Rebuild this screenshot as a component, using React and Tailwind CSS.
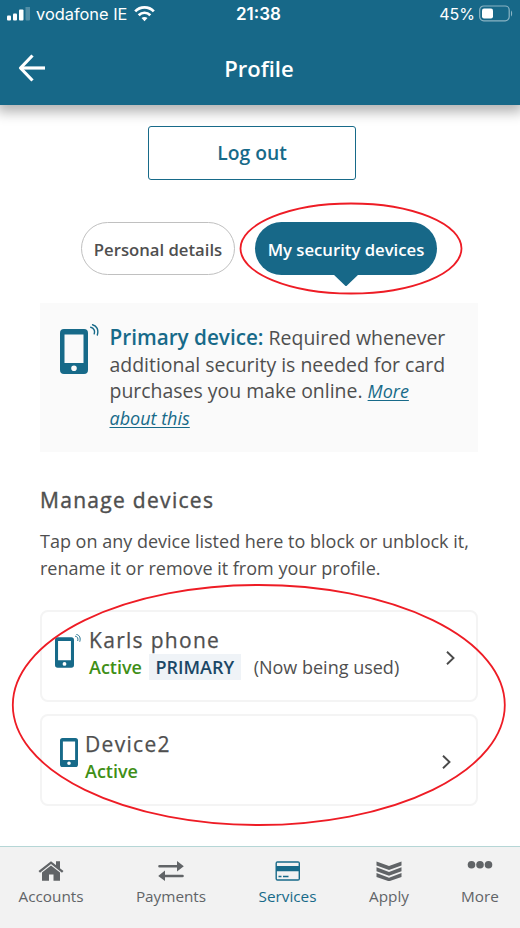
import React from "react";

function PhoneIcon({ className }) {
  return (
    <svg viewBox="0 0 28 45" className={className}>
      <path
        fillRule="evenodd"
        fill="#176a89"
        d="M4 0h20a4 4 0 0 1 4 4v37a4 4 0 0 1-4 4H4a4 4 0 0 1-4-4V4a4 4 0 0 1 4-4ZM4.500 5.500v28.500h19V5.500ZM14 36.500a2.800 2.800 0 1 0 0 5.600a2.800 2.800 0 0 0 0-5.600Z"
      />
    </svg>
  );
}

function WavesIcon({ className }) {
  return (
    <svg
      viewBox="0 0 9 12"
      fill="none"
      stroke="#176a89"
      strokeWidth="1.400"
      strokeLinecap="round"
      className={className}
    >
      <path d="M2.600 .7C7 1.700 8.800 6 7.300 11" />
      <path d="M.7 3.300C3.800 3.900 5.200 6.500 4.200 9.900" />
    </svg>
  );
}

function Chevron({ className }) {
  return (
    <svg
      viewBox="0 0 9 14"
      fill="none"
      stroke="#4a4a4a"
      strokeWidth="1.900"
      className={className}
    >
      <path d="M1 .8L7.500 7L1 13.200" />
    </svg>
  );
}

function StatusBar() {
  return (
    <div className="relative flex h-7 items-center text-[17px] leading-7 text-white">
      <svg viewBox="0 0 24 15" className="ml-[7px] h-[15px] w-6 shrink-0" fill="#fff">
        <rect x="0" y="8.500" width="4" height="5" rx="1" />
        <rect x="6" y="6.500" width="4" height="7" rx="1" />
        <rect x="12" y="2.500" width="4.500" height="11" rx="1" />
        <rect x="18.500" y="-.5" width="4.500" height="14" rx="1" opacity=".25" />
      </svg>
      <span className="ml-[5px] w-[91px] whitespace-nowrap font-[Inter,sans-serif] text-[16.400px]">
        vodafone IE
      </span>
      <svg viewBox="0 0 21 16" className="ml-[7px] h-4 w-[21px] shrink-0" fill="none" stroke="#fff" strokeWidth="2.700">
        <path d="M1.200 5.400C6.200 .1 14.800 .1 19.800 5.400" />
        <path d="M4.700 9.200C8 5.900 13 5.900 16.300 9.200" />
        <path d="M7.500 12.100C9.200 10.500 11.800 10.500 13.500 12.100L10.500 15.200Z" fill="#fff" stroke="none" />
      </svg>
      <span className="ml-[81px] w-[46px] whitespace-nowrap font-[Inter,sans-serif] text-[17px] font-semibold">
        21:38
      </span>
      <span className="ml-auto mr-1 font-[Inter,sans-serif] text-[16px]">45%</span>
      <svg viewBox="0 0 34 17" className="-mt-[2px] mr-[7px] h-[17px] w-[34px] shrink-0">
        <rect x=".7" y="1" width="29.500" height="14.800" rx="4" fill="none" stroke="#8bb4c4" strokeWidth="1.200" />
        <rect x="3" y="3.500" width="11" height="10" rx="2" fill="#fff" />
        <path d="M32 5.500v6C33.500 10.500 33.500 6.500 32 5.500Z" fill="#8bb4c4" />
      </svg>
    </div>
  );
}

function Header() {
  return (
    <header className="h-[105px] bg-[#176888] shadow-[0_4px_12px_3px_rgba(0,0,0,0.3)]">
      <StatusBar />
      <div className="grid h-20 grid-cols-[60px_1fr_62px] items-center">
        <svg viewBox="0 0 28 28" className="ml-[18px] h-7 w-7" fill="none" stroke="#fff" strokeWidth="3.200">
          <path d="M27 14H3" />
          <path d="M14.500 1.500L2.500 14L14.500 26.500" strokeLinejoin="round" />
        </svg>
        <h1 className="text-center text-[22px] font-semibold text-white">Profile</h1>
      </div>
    </header>
  );
}

function Tabs() {
  return (
    <div className="ml-[81px] mt-[42px] flex gap-5">
      <button className="h-[53px] w-[154px] whitespace-nowrap rounded-full border border-[#c0c0c0] pt-[2px] text-[16.700px] font-semibold text-[#4f4f4f]">
        Personal details
      </button>
      <button className="relative h-[53px] w-[182px] whitespace-nowrap rounded-full bg-[#176888] pt-[2px] text-[16.700px] font-semibold text-white">
        My security devices
        <svg viewBox="0 0 26 13" className="absolute left-[78px] top-[52px] h-[13px] w-[26px]" fill="#176888">
          <path d="M0 0H26L14 11.500Q13 12.500 12 11.500Z" />
        </svg>
      </button>
    </div>
  );
}

function PrimaryNotice() {
  return (
    <section className="ml-10 mt-7 flex h-[149px] w-[438px] bg-[#fafafa]">
      <div className="flex w-[69.500px] shrink-0 pl-5">
        <PhoneIcon className="mt-[26px] h-[45px] w-7" />
        <WavesIcon className="ml-[2px] mt-[21px] h-3 w-[9px]" />
      </div>
      <p className="mt-[21px] whitespace-nowrap text-[19.450px] leading-[26.500px] text-[#4f4f4f]">
        <span className="text-[20.700px] font-semibold text-[#176a89]">Primary device:</span>{" "}
        Required whenever
        <br />
        additional security is needed for card
        <br />
        purchases you make online.{" "}
        <a className="text-[18px] italic text-[#176a89] underline underline-offset-2">More</a>
        <br />
        <a className="text-[18px] italic text-[#176a89] underline underline-offset-2">about this</a>
      </p>
    </section>
  );
}

function DeviceCards() {
  return (
    <div className="ml-10 mt-7 flex w-[438px] flex-col gap-3">
      <div className="flex h-[92px] rounded-lg border-2 border-[#f4f4f4] pl-[13px]">
        <PhoneIcon className="mt-[25px] h-[31px] w-[19px]" />
        <WavesIcon className="ml-[1px] mt-[22px] h-2 w-[6px]" />
        <div className="ml-2 mt-[14px] whitespace-nowrap">
          <h3 className="text-[21px] leading-7 tracking-[1.300px] text-[#4f4f4f] [-webkit-text-stroke:0.25px_#4f4f4f]">
            Karls phone
          </h3>
          <div className="flex items-center text-[18px] leading-[26px]">
            <span className="font-semibold text-[#3f8f17]">Active</span>
            <span className="ml-[7px] bg-[#eff3f7] px-[6.500px] font-semibold text-[#1b4766]">PRIMARY</span>
            <span className="ml-[13px] text-[#4f4f4f]">(Now being used)</span>
          </div>
        </div>
        <Chevron className="ml-auto mr-[21px] mt-[39px] h-[14px] w-[9px]" />
      </div>
      <div className="flex h-[92px] rounded-lg border-2 border-[#f4f4f4] pl-[18px]">
        <PhoneIcon className="mt-[22px] h-[29px] w-[18px]" />
        <div className="ml-[7px] mt-[14px] whitespace-nowrap">
          <h3 className="text-[21px] leading-7 tracking-[1.300px] text-[#4f4f4f] [-webkit-text-stroke:0.25px_#4f4f4f]">
            Device2
          </h3>
          <div className="text-[18px] font-semibold leading-[26px] text-[#3f8f17]">Active</div>
        </div>
        <Chevron className="ml-auto mr-[25px] mt-[39px] h-[14px] w-[9px]" />
      </div>
    </div>
  );
}

function NavItem({ label, children, className }) {
  return (
    <div className={`flex flex-col items-center pt-[14px] ${className}`}>
      <svg viewBox="0 0 26 20" className="h-5 w-[26px]" fill="currentColor">
        {children}
      </svg>
      <span className="mt-[3px] text-[15.300px] leading-6">{label}</span>
    </div>
  );
}

function BottomNav() {
  return (
    <nav className="mt-10 flex h-[82px] border-t border-[#b5d6d6] bg-[#f2f2f2] text-[#616467]">
      <NavItem label="Accounts" className="w-[102px]">
        <path d="M13 .2L25.500 10L24 11.800L13 3.100L2 11.800L.5 10Z M18 .2h4v7.800l-4-3.300Z" />
        <path d="M13 4.500L22 11.500V19.800H15.500V13.500H11V19.800H4V11.500Z" />
      </NavItem>
      <NavItem label="Payments" className="w-[138px]">
        <path d="M1.500 4H19V0L25.800 5.200L19 10.400V6.600H1.500A1.300 1.300 0 0 1 1.500 4Z" />
        <path d="M24.500 13.700H7V9.600L.2 14.900L7 20V16.300H24.500A1.300 1.300 0 0 0 24.500 13.700Z" />
      </NavItem>
      <NavItem label="Services" className="w-[95px] text-[#176a89]">
        <path
          fillRule="evenodd"
          d="M2.500 .2h20.500a2 2 0 0 1 2 2v15.500a2 2 0 0 1-2 2H2.500a2 2 0 0 1-2-2V2.200a2 2 0 0 1 2-2ZM1.900 1.800v3.200h21.700V1.800ZM1.900 10.200v8h21.700v-8Z"
        />
        <path d="M3.500 14.700h3v1.600h-3zM8 14.700h5.500v1.600H8z" />
      </NavItem>
      <NavItem label="Apply" className="w-[108px]">
        <path d="M.5 .6L13 5L25.500 .6V4.500L13 9L.5 4.500Z" />
        <path d="M.5 6.300L13 10.900L25.500 6.300V10.200L13 14.700L.5 10.200Z" />
        <path d="M.5 12.100L13 16.700L25.500 12.100V16L13 20.300L.5 16Z" />
      </NavItem>
      <NavItem label="More" className="w-[74px]">
        <circle cx="4.500" cy="3.800" r="3.800" />
        <circle cx="13" cy="3.800" r="3.800" />
        <circle cx="21.500" cy="3.800" r="3.800" />
      </NavItem>
    </nav>
  );
}

export default function App() {
  return (
    <div className="relative h-[928px] w-[520px] overflow-hidden bg-white font-['Open_Sans',sans-serif]">
      <Header />
      <button className="ml-[148px] mt-[21px] block h-[54px] w-[208px] rounded-[3px] border-[1.500px] border-[#176a89] text-[19.300px] font-semibold text-[#176a89]">
        Log out
      </button>
      <Tabs />
      <PrimaryNotice />
      <h2 className="ml-10 mt-[34px] text-[21px] leading-7 tracking-[1.300px] text-[#4f4f4f] [-webkit-text-stroke:0.4px_#4f4f4f]">
        Manage devices
      </h2>
      <p className="ml-10 mt-[14px] h-[54px] whitespace-nowrap text-[18px] leading-[26.500px] text-[#4f4f4f]">
        Tap on any device listed here to block or unblock it,
        <br />
        rename it or remove it from your profile.
      </p>
      <DeviceCards />
      <BottomNav />
      <svg
        viewBox="0 0 520 928"
        className="pointer-events-none absolute left-0 top-0 h-[928px] w-[520px]"
        fill="none"
        stroke="#ee1c25"
        strokeWidth="1.800"
      >
        <ellipse cx="351" cy="248.500" rx="110.500" ry="45" />
        <ellipse cx="258.800" cy="705" rx="246" ry="120" />
      </svg>
    </div>
  );
}
